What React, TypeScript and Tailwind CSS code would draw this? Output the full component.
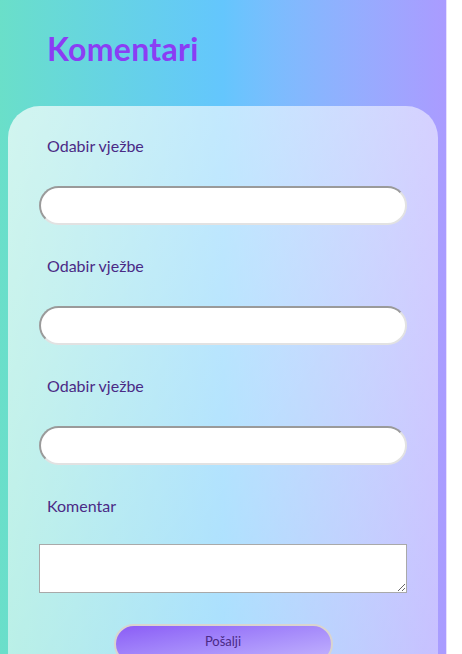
export default function App() {
  const labelCls = "ml-2 text-[16px] leading-5 text-[#4b2a86]";
  const inputCls =
    "block h-[39px] w-full rounded-[20px] border-2 border-t-[#9a9a9a] border-l-[#9a9a9a] border-b-[#e2e2e2] border-r-[#e2e2e2] bg-white px-3 outline-none";

  return (
    <div
      className="min-h-screen w-[447px] border-r border-[#e6defe] bg-linear-to-r from-[#6adfc9] via-[#64c6fd] to-[#aa9bff]"
      style={{ fontFamily: "Lato, 'Noto Sans', sans-serif" }}
    >
      <h1 className="pl-[47px] pt-[29px] text-[32px] font-bold leading-[40px] tracking-[0.3px] text-[#8b3df4]">
        Komentari
      </h1>

      <div className="mx-2 mt-[37px] rounded-t-[32px] bg-linear-to-br from-white/70 to-white/35 px-[31px] pt-[30px] pb-10">
        {["Odabir vježbe", "Odabir vježbe", "Odabir vježbe"].map((label, i) => (
          <div key={i} className="mb-[31px]">
            <p className={labelCls}>{label}</p>
            <input type="text" className={`mt-[30px] ${inputCls}`} />
          </div>
        ))}

        <div>
          <p className={labelCls}>Komentar</p>
          <textarea className="mt-[28px] block h-[49px] w-full border border-[#a9a9a9] bg-white" />
        </div>

        <div className="mt-[31px] flex justify-center">
          <button className="h-10 w-[219px] rounded-full border-2 border-[#d9d4cf] bg-linear-to-br from-[#8b5cf6] to-[#c4b5fd] pb-1 text-[13px] text-[#4b2a86]">
            Pošalji
          </button>
        </div>
      </div>
    </div>
  );
}
